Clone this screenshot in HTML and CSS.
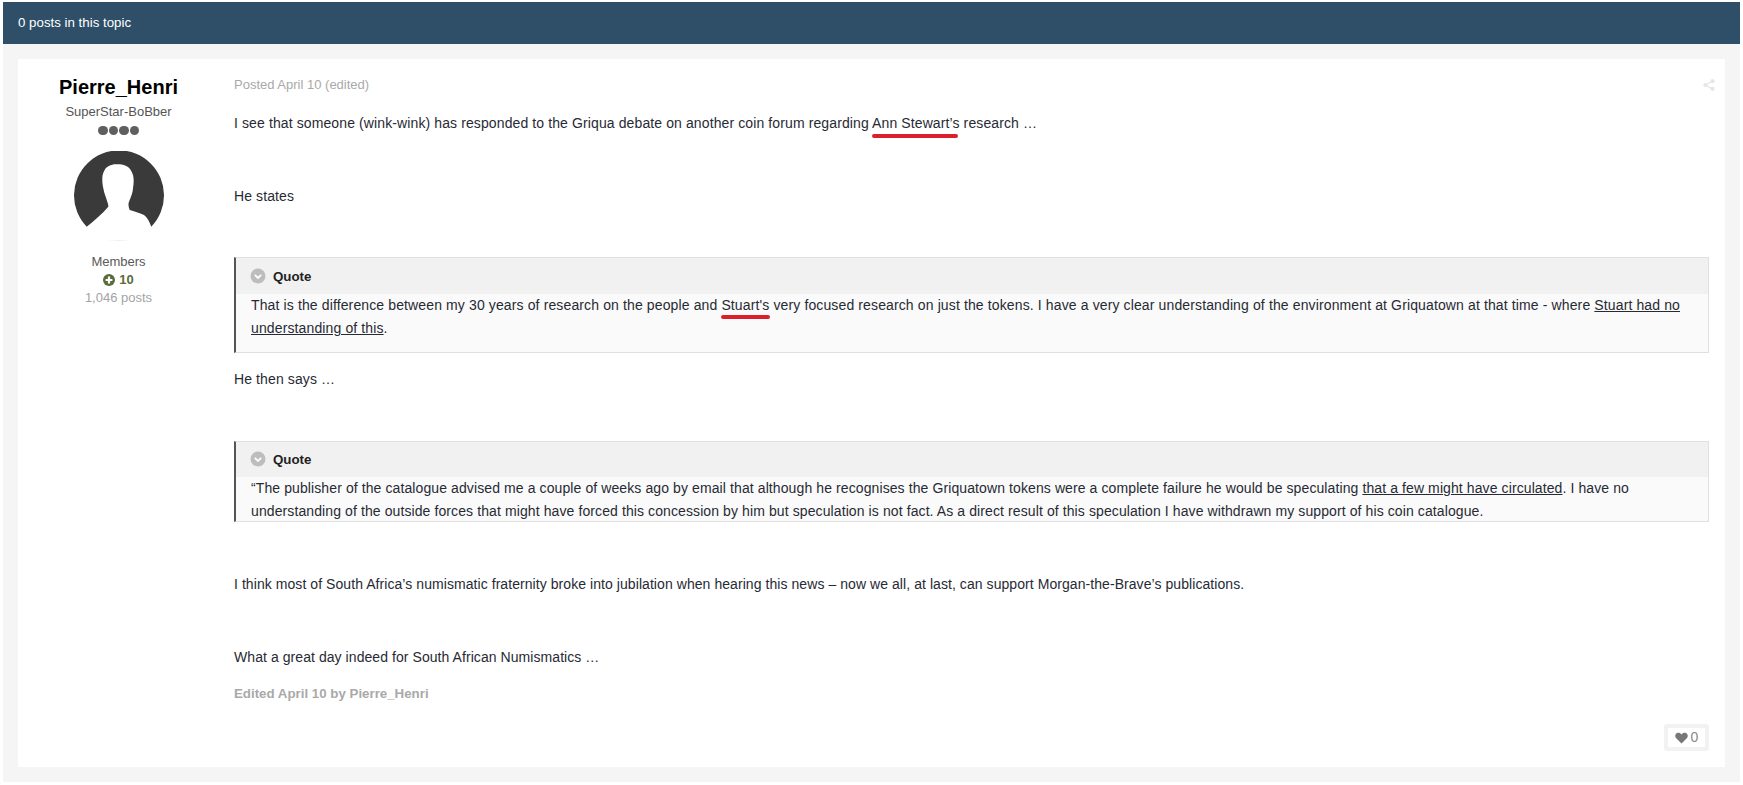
FILE: index.html
```html
<!DOCTYPE html>
<html lang="en">
<head>
<meta charset="utf-8">
<title>Topic</title>
<link rel="stylesheet" href="styles.css">
</head>
<body>
<div class="topic">
  <div class="topic-header">0 posts in this topic</div>
  <div class="post">
    <aside class="author">
      <h3 class="author-name">Pierre_Henri</h3>
      <div class="author-title">SuperStar-BoBber</div>
      <div class="pips"><i></i><i></i><i></i><i></i></div>
      <svg class="avatar" width="90" height="90" viewBox="0 0 90 90">
        <path d="M12.700 75.700 A45 45 0 1 1 77.300 75.700 C75.500 71 73.500 66.500 70 64 C65.500 61.500 60 60.500 55.700 59 C54.500 56 54 53.500 55 50.700 C57.300 45 59 41 59 37.300 C59.800 32 60 28 59 24 C57.500 19 55 16 51.700 14.700 C48 13 44 13 40 13.300 C36.500 14 33.500 15.500 31.700 17.300 C29.500 20.500 28.300 24 28.300 27.300 C28.300 31 28.500 34 29.300 37.300 C30 42 32 46 33.300 50.700 C34 52.500 34.500 54 34.300 55.700 C28 63 20 70 12.700 75.700 Z" fill="#3a3a3a"/>
      </svg>
      <div class="avatar-shadow"></div>
      <div class="author-group">Members</div>
      <div class="author-rep">
        <svg width="12" height="12" viewBox="0 0 12 12"><circle cx="6" cy="6" r="6" fill="#5a6b3c"/><path d="M6 2.600v6.800M2.600 6h6.800" stroke="#fff" stroke-width="2.200"/></svg>
        <span>10</span>
      </div>
      <div class="author-posts">1,046 posts</div>
    </aside>
    <article class="content">
      <div class="meta">
        <span>Posted April 10 (edited)</span>
        <svg class="share" width="12" height="12" viewBox="0 0 12 12"><path d="M9.500 2 2.500 6l7 4" stroke="#e6e6e6" stroke-width="1.200" fill="none"/><circle cx="9.500" cy="2.200" r="2.100" fill="#e6e6e6"/><circle cx="2.400" cy="6" r="2.100" fill="#e6e6e6"/><circle cx="9.500" cy="9.800" r="2.100" fill="#e6e6e6"/></svg>
      </div>
      <p>I see that someone (wink-wink) has responded to the Griqua debate on another coin forum regarding <span class="marked marked-ann">Ann Stewart’s</span> research …</p>
      <p>&nbsp;</p>
      <p>He states</p>
      <p>&nbsp;</p>
      <blockquote class="quote">
        <div class="quote-head"><svg width="16" height="16" viewBox="0 0 16 16"><circle cx="8" cy="8" r="7.500" fill="#bdbdbd"/><path d="M4.800 6.800 8 10l3.200-3.200" stroke="#fff" stroke-width="1.800" fill="none"/></svg><span>Quote</span></div>
        <div class="quote-body quote-body-tall">That is the difference between my 30 years of research on the people and <span class="marked marked-stuart">Stuart's</span> very focused research on just the tokens. I have a very clear understanding of the environment at Griquatown at that time - where <u>Stuart had no understanding of this</u>.</div>
      </blockquote>
      <p>He then says …</p>
      <p>&nbsp;</p>
      <blockquote class="quote">
        <div class="quote-head"><svg width="16" height="16" viewBox="0 0 16 16"><circle cx="8" cy="8" r="7.500" fill="#bdbdbd"/><path d="M4.800 6.800 8 10l3.200-3.200" stroke="#fff" stroke-width="1.800" fill="none"/></svg><span>Quote</span></div>
        <div class="quote-body quote-body-tight">“The publisher of the catalogue advised me a couple of weeks ago by email that although he recognises the Griquatown tokens were a complete failure he would be speculating <u>that a few might have circulated</u>. I have no understanding of the outside forces that might have forced this concession by him but speculation is not fact. As a direct result of this speculation I have withdrawn my support of his coin catalogue.</div>
      </blockquote>
      <p>&nbsp;</p>
      <p class="narrow">I think most of South Africa’s numismatic fraternity broke into jubilation when hearing this news – now we all, at last, can support Morgan-the-Brave’s publications.</p>
      <p>&nbsp;</p>
      <p class="narrow">What a great day indeed for South African Numismatics …</p>
      <div class="edited">Edited April 10 by Pierre_Henri</div>
      <div class="reactions">
        <div class="like"><svg width="13" height="12" viewBox="0 0 13 12"><path d="M6.500 11.500 1.200 6.300C-.4 4.600.1 1.900 2 1 3.600.3 5.400.9 6.500 2.400 7.600.9 9.400.3 11 1c1.900.9 2.400 3.600.8 5.300Z" fill="#777"/></svg><span>0</span></div>
      </div>
    </article>
  </div>
</div>
</body>
</html>
```
FILE: styles.css
```css
* { box-sizing: border-box; }
html, body { margin: 0; padding: 0; background: #fff; }
body { font-family: "Liberation Sans", Arial, sans-serif; font-size: 14px; line-height: 23px; color: #272a34; }
.topic { margin: 2px 3px 0; background: #f5f5f5; padding-bottom: 15px; }
.topic-header { height: 42px; background: #2f4f68; color: #fff; font-size: 13.300px; line-height: 42px; padding-left: 15px; }
.post { display: flex; margin: 15px 15px 0; background: #fff; height: 708px; }
.author { width: 201px; padding-top: 14px; display: flex; flex-direction: column; align-items: center; flex: none; }
.author-name { margin: 0; font-size: 20px; line-height: 28px; font-weight: 700; color: #000; }
.author-title { font-size: 13px; line-height: 18px; color: #555; margin-top: 2px; }
.pips { display: flex; gap: 1px; margin-top: 2px; height: 15px; align-items: center; }
.pips i { width: 9.500px; height: 9.500px; border-radius: 50%; background: #5f5f5f; }
.avatar { display: block; margin-top: 13px; }
.avatar-shadow { width: 24px; height: 1px; background: linear-gradient(90deg, #fff, #eee, #fff); margin-top: -1px; }
.author-group { font-size: 13px; line-height: 18px; color: #5a5a5a; margin-top: 12px; }
.author-rep { display: flex; align-items: center; gap: 4px; font-size: 13px; font-weight: 700; line-height: 18px; color: #5a6b3c; }
.author-posts { font-size: 13px; line-height: 18px; color: #a4a4a4; }
.content { flex: 1; padding: 0 16px 0 15px; min-width: 0; }
.meta { display: flex; justify-content: space-between; align-items: center; font-size: 13px; line-height: 18px; color: #a9a9a9; padding-top: 17px; }
.share { margin-right: -6px; }
p { margin: 0 0 13.300px; letter-spacing: .11px; }
p.narrow { letter-spacing: .065px; }
.meta + p { margin-top: 18px; }
.marked { position: relative; }
.marked::after { content: ""; position: absolute; left: 0; height: 4px; border-radius: 2px; background: #dc1e2d; }
.marked-ann::after { right: 2px; top: 19px; }
.marked-stuart::after { right: -1px; top: 18px; }
.quote { margin: 13.500px 0 15px; border: 1px solid #e0e0e0; border-left: 2px solid #555; background: #fafafa; }
.quote-head { display: flex; align-items: center; gap: 7px; height: 35.500px; background: #f1f1f1; padding-left: 14px; font-size: 13.300px; font-weight: 700; color: #222; }
.quote-body { padding: 0 15px; }
.quote-body-tall { padding-bottom: 12px; letter-spacing: .125px; }
.quote-body-tight { margin-bottom: -2px; letter-spacing: .1px; }
u { text-decoration: underline; }
.edited { font-size: 13.300px; font-weight: 700; color: #a9a9a9; line-height: 20px; padding-top: 2px; }
.reactions { display: flex; justify-content: flex-end; margin-top: 20px; }
.like { display: flex; align-items: center; justify-content: center; gap: 3px; width: 45px; height: 27px; border: 4px solid #f2f2f2; border-radius: 3px; background: #fff; color: #888; font-size: 14px; }
```
